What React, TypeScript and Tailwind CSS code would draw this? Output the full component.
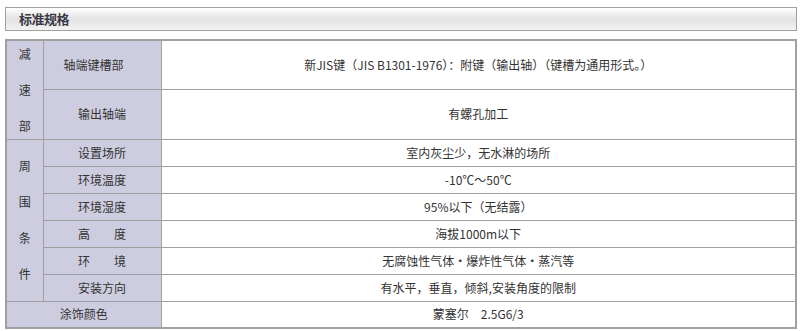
const ROWS_ENV = [
  { label: "设置场所", value: "室内灰尘少，无水淋的场所" },
  { label: "环境温度", value: "-10℃～50℃" },
  { label: "环境湿度", value: "95%以下（无结露）" },
  { label: "高　　度", value: "海拔1000m以下" },
  { label: "环　　境", value: "无腐蚀性气体·爆炸性气体·蒸汽等" },
  { label: "安装方向", value: "有水平，垂直，倾斜,安装角度的限制" },
];

const label = "bg-[#cdcddf] border border-[#a0a0a0] text-center align-middle p-0 leading-[16px]";
const value = "bg-white border border-[#a0a0a0] text-center align-middle p-0 leading-[16px]";

function Stack({ chars }: { chars: string[] }) {
  return (
    <div className="flex flex-col items-center gap-[20px]">
      {chars.map((c) => (
        <span key={c} className="h-[16px] leading-[16px]">{c}</span>
      ))}
    </div>
  );
}

export default function App() {
  return (
    <div className="w-[806px] h-[331px] bg-white pt-[7px] pl-[5px] text-[12px] text-[#333] font-['SimSun','Noto_Sans_CJK_SC',sans-serif]">
      {/* Title bar */}
      <div className="w-[792px] h-[24px] border border-[#a0a0a0] bg-gradient-to-b from-white via-[#e2e2e2] to-[#f3f3f3] flex items-center pl-[13px]">
        <span className="text-[13px] font-bold text-[#3a3a46] tracking-[-0.5px]">标准规格</span>
      </div>

      <table className="mt-[8px] w-[792px] table-fixed border-collapse border-2 border-[#a0a0a0]">
        <colgroup>
          <col className="w-[37px]" />
          <col className="w-[118px]" />
          <col />
        </colgroup>
        <tbody>
          <tr className="h-[49px]">
            <td rowSpan={2} className={label}>
              <Stack chars={["减", "速", "部"]} />
            </td>
            <td className={label}>
              <span className="pr-[17px]">轴端键槽部</span>
            </td>
            <td className={value}>新JIS键（JIS B1301-1976）：附键（输出轴）（键槽为通用形式。）</td>
          </tr>
          <tr className="h-[50px]">
            <td className={label}>输出轴端</td>
            <td className={value}>有螺孔加工</td>
          </tr>
          {ROWS_ENV.map((r, i) => (
            <tr key={r.label} className="h-[27px]">
              {i === 0 && (
                <td rowSpan={6} className={label}>
                  <Stack chars={["周", "围", "条", "件"]} />
                </td>
              )}
              <td className={`${label} whitespace-pre`}>{r.label}</td>
              <td className={value}>{r.value}</td>
            </tr>
          ))}
          <tr className="h-[27px]">
            <td colSpan={2} className={label}>涂饰颜色</td>
            <td className={value}>蒙塞尔　2.5G6/3</td>
          </tr>
        </tbody>
      </table>
    </div>
  );
}
